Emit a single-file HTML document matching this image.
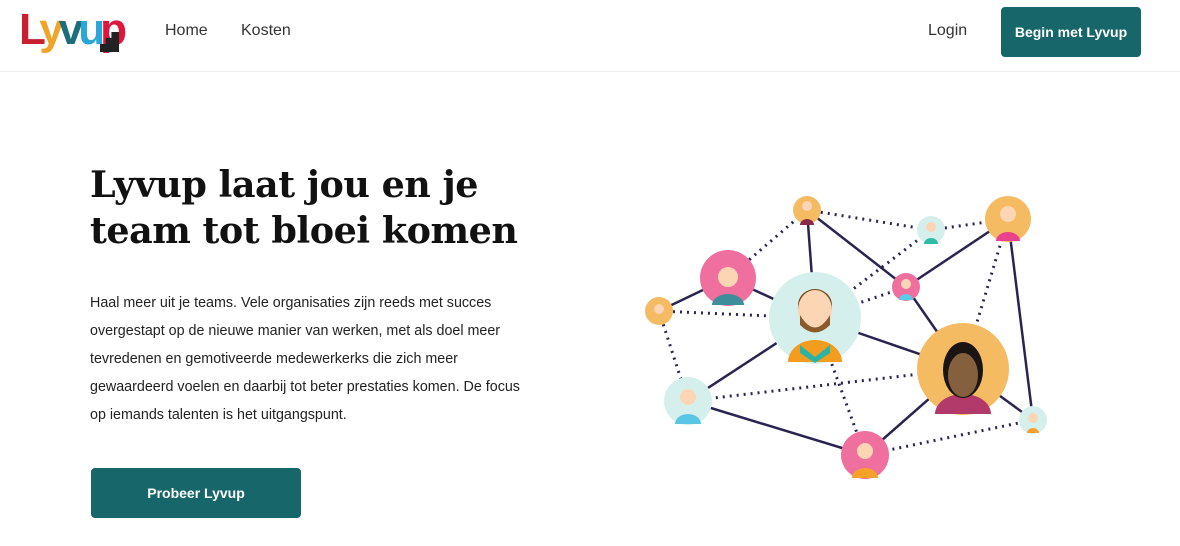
<!DOCTYPE html>
<html><head><style>
*{margin:0;padding:0;box-sizing:border-box}
body{width:1180px;height:546px;overflow:hidden;background:#fff;font-family:"Liberation Sans",sans-serif;position:relative}
.nav{position:absolute;left:0;top:0;width:1180px;height:72px;border-bottom:1px solid #eee}
.logo{position:absolute;left:19px;top:8px;font-weight:bold;font-size:44px;letter-spacing:-5px;line-height:44px}
.nl{position:absolute;top:22px;font-size:16px;color:#333}
.btn{position:absolute;background:#17676a;color:#fff;font-weight:bold;font-size:14px;border-radius:4px;display:flex;align-items:center;justify-content:center}
h1{position:absolute;left:90px;top:162px;font-family:"DejaVu Serif",serif;font-weight:bold;font-size:36.5px;line-height:46px;color:#111;letter-spacing:-0.5px}
p{position:absolute;left:90px;top:289px;width:442px;font-size:14.3px;line-height:28px;color:#222}
</style></head><body>
<div class="nav">
<div class="logo"><span style="color:#c8202e">L</span><span style="color:#f0a52a">y</span><span style="color:#1c6f7a">v</span><span style="color:#2aa6d8">u</span><span style="color:#e0153e">p</span></div>
<div style="position:absolute;left:100px;top:32px;width:19px;height:20px;background:#222;clip-path:polygon(0 100%,0 60%,30% 60%,30% 30%,60% 30%,60% 0,100% 0,100% 100%)"></div>
<div class="nl" style="left:165px">Home</div>
<div class="nl" style="left:241px">Kosten</div>
<div class="nl" style="left:928px">Login</div>
<div class="btn" style="left:1001px;top:7px;width:140px;height:50px">Begin met Lyvup</div>
</div>
<h1>Lyvup laat jou en je<br>team tot bloei komen</h1>
<p>Haal meer uit je teams. Vele organisaties zijn reeds met succes overgestapt op de nieuwe manier van werken, met als doel meer tevredenen en gemotiveerde medewerkerks die zich meer gewaardeerd voelen en daarbij tot beter prestaties komen. De focus op iemands talenten is het uitgangspunt.</p>
<div class="btn" style="left:91px;top:468px;width:210px;height:50px">Probeer Lyvup</div>
<svg width="1180" height="546" style="position:absolute;left:0;top:0">
<g stroke="#2a2550" stroke-width="2.5" fill="none">
<path d="M659 311L728 278M728 278L815 318M807 210L815 318M807 210L906 287M906 287L1008 219M906 287L963 369M815 318L963 369M815 318L688 401M688 401L865 455M865 455L963 369M963 369L1033 420M1008 219L1033 420"/>
</g>
<g stroke="#2a2550" stroke-width="3" fill="none" stroke-dasharray="2 5">
<path d="M728 278L807 210M807 210L931 230M931 230L1008 219M659 311L815 318M659 311L688 401M815 318L931 230M815 318L906 287M1008 219L963 369M688 401L963 369M815 318L865 455M865 455L1033 420"/>
</g>
<g>
<circle cx="807" cy="210" r="14" fill="#f5bb63"/><circle cx="931" cy="230" r="14" fill="#d5f0ec"/><circle cx="1008" cy="219" r="23" fill="#f5bb63"/>
<circle cx="728" cy="278" r="28" fill="#ef6f9f"/><circle cx="659" cy="311" r="14" fill="#f5bb63"/><circle cx="815" cy="318" r="46" fill="#d5f0ec"/>
<circle cx="906" cy="287" r="14" fill="#ef6f9f"/><circle cx="963" cy="369" r="46" fill="#f5bb63"/><circle cx="688" cy="401" r="24" fill="#d5f0ec"/>
<circle cx="865" cy="455" r="24" fill="#ef6f9f"/><circle cx="1033" cy="420" r="14" fill="#d5f0ec"/>
</g>
<g fill="#fcd5b5">
<circle cx="807" cy="206" r="5"/><circle cx="931" cy="227" r="5"/><circle cx="1008" cy="214" r="8"/><circle cx="728" cy="277" r="10"/><circle cx="659" cy="309" r="5"/>
<circle cx="906" cy="284" r="5"/><circle cx="688" cy="397" r="8"/><circle cx="865" cy="451" r="8"/><circle cx="1033" cy="418" r="5"/>
</g>
<path d="M800 225a7 6 0 0 1 14 0z" fill="#8a2a4a"/><path d="M924 244a7 6 0 0 1 14 0z" fill="#2dbba5"/><path d="M996 241a12 9 0 0 1 24 0z" fill="#e8438a"/>
<path d="M712 305a16 11 0 0 1 32 0z" fill="#3d8e9a"/><path d="M899 300a7 6 0 0 1 14 0z" fill="#5bcbe6"/><path d="M675 424a13 10 0 0 1 26 0z" fill="#5bc6e3"/>
<path d="M852 478a13 10 0 0 1 26 0z" fill="#f7a02a"/><path d="M1027 433a6 5 0 0 1 12 0z" fill="#f7a02a"/>
<path d="M788 362a27 22 0 0 1 54 0z" fill="#f39c1e"/><path d="M800 345l15 12 15-12v8l-15 10-15-10z" fill="#2bb4a4"/>
<ellipse cx="815" cy="310" rx="17" ry="20" fill="#fcd5b5"/><path d="M798 310a17 20 0 0 1 34 0v-5a17 16 0 0 0-34 0z" fill="#7a4a22"/>
<path d="M800 315q15 25 30 0v10q-15 15-30 0z" fill="#8a5a2a"/>
<path d="M935 414a28 20 0 0 1 56 0z" fill="#b23a6a"/><ellipse cx="963" cy="370" rx="20" ry="28" fill="#1a1412"/><ellipse cx="963" cy="375" rx="15" ry="22" fill="#85603f"/>
</svg>
</body></html>
